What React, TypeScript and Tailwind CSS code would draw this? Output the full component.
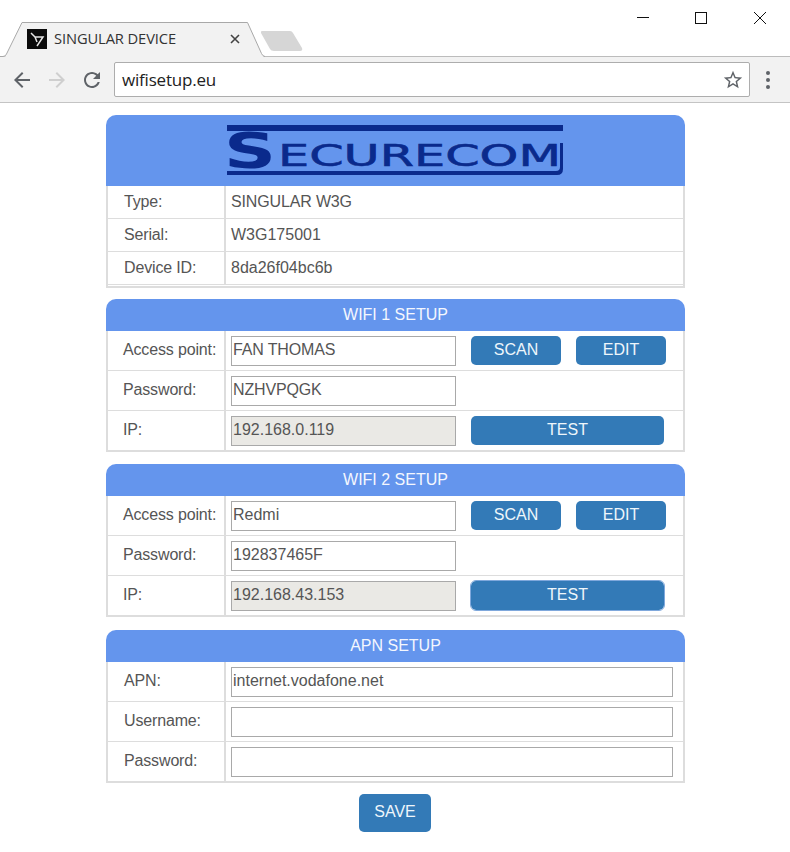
import type { ReactNode } from "react";

function Logo() {
  return (
    <svg width="338" height="52" viewBox="0 0 338 52" className="block overflow-visible">
      <rect x="0" y="0" width="336" height="6" fill="#0a2a8c" />
      <path d="M0 46h329q4 0 4-4V18h3v26q0 6-6 6H0z" fill="#0a2a8c" />
      <text
        x="-3"
        y="43"
        fontSize="49"
        fontWeight="700"
        textLength="52"
        lengthAdjust="spacingAndGlyphs"
        fill="#0a2a8c"
        className="font-['DejaVu_Sans',sans-serif]"
      >
        S
      </text>
      <text
        x="51"
        y="41"
        fontSize="31"
        textLength="283"
        lengthAdjust="spacingAndGlyphs"
        fill="#0a2a8c"
        stroke="#0a2a8c"
        strokeWidth="0.6"
        className="font-['DejaVu_Sans',sans-serif]"
      >
        ECURECOM
      </text>
    </svg>
  );
}

function Card({ title, mt, children }: { title: string; mt: string; children: ReactNode }) {
  return (
    <section className={`${mt} w-[579px]`}>
      <h2 className="h-8 rounded-t-[10px] bg-[#6495ed] text-center text-base font-normal leading-[31px] text-[#f4f7fe]">
        {title}
      </h2>
      <div className="border-x-2 border-b-2 border-[#dddddd]">{children}</div>
    </section>
  );
}

function Row({ label, children, last, inset }: { label: string; children: ReactNode; last?: boolean; inset?: boolean }) {
  return (
    <div className={`flex ${last ? "h-[39px]" : "h-10 border-b border-[#dddddd]"}`}>
      <div
        className={`flex w-[118px] shrink-0 items-center border-r-2 border-[#dddddd] pb-px tracking-[-0.15px] text-[#555555] ${
          inset ? "pl-4" : "pl-[15px]"
        }`}
      >
        {label}
      </div>
      <div className="flex flex-1 items-center gap-[15px] pl-[5px]">{children}</div>
    </div>
  );
}

function Field({ value = "", disabled, wide, tight }: { value?: string; disabled?: boolean; wide?: boolean; tight?: boolean }) {
  return (
    <input
      readOnly
      value={value}
      className={`h-[30px] border border-[#a9a9a9] px-px pb-0.5 text-base text-[#555555] outline-none ${
        wide ? "w-[442px]" : "w-[225px]"
      } ${disabled ? "bg-[#eae9e5]" : "bg-white"} ${tight ? "tracking-[-0.15px]" : ""}`}
    />
  );
}

function Btn({ children, w, focus }: { children: ReactNode; w: string; focus?: boolean }) {
  return (
    <button
      className={`${w} h-[29px] rounded-[5px] bg-[#337ab7] pb-0.5 text-base leading-none text-[#eef6fb] ${
        focus ? "outline outline-[#7fa8dc]" : ""
      }`}
    >
      {children}
    </button>
  );
}

function InfoRow({ label, value, last, tight }: { label: string; value: string; last?: boolean; tight?: boolean }) {
  return (
    <div className={`flex h-[33px] border-b border-[#dddddd] ${last ? "mb-px" : ""}`}>
      <div className="flex w-[118px] shrink-0 items-center border-r-2 border-[#dddddd] pl-4 tracking-[-0.15px] text-[#555555]">
        {label}
      </div>
      <div className={`flex items-center pl-[5px] text-[#555555] ${tight ? "tracking-[-0.15px]" : ""}`}>{value}</div>
    </div>
  );
}

export default function App() {
  return (
    <div className="min-h-[852px] w-[790px] bg-white font-['Liberation_Sans',Arial,sans-serif] text-base">
      {/* browser chrome */}
      <div className="flex h-[57px] items-start justify-between border-b border-[#bcbcbc] pt-[22px]">
        <div className="flex items-start">
          <div className="relative z-10 -mb-px flex h-[35px] w-[266px] items-center pl-[27px]">
            <svg width="266" height="35" viewBox="0 0 266 35" className="absolute left-0 top-0">
              <path d="M0 34.5h5.5L22 .5h225.5l14.5 32 2 2.5v1H0z" fill="#f2f2f2" />
              <path d="M0 34.5h3q2.5 0 3.5-2.5L22 .5h225.5l14 31q1.2 2.8 3.5 3" fill="none" stroke="#a8a8a8" />
            </svg>
            <svg width="20" height="20" viewBox="0 0 20 20" className="relative -mt-0.5 shrink-0">
              <rect width="20" height="20" fill="#0b0b0b" />
              <path d="M4 4l4 4h8l-6 9M8 8l2 5" fill="none" stroke="#e6e6e6" strokeWidth="1.5" />
            </svg>
            <span className="relative ml-[7px] -mt-0.5 w-[176px] font-['Open_Sans',sans-serif] text-[14.7px] tracking-[-0.1px] text-[#333333]">
              SINGULAR DEVICE
            </span>
            <svg width="10" height="10" viewBox="0 0 10 10" className="relative -mt-0.5">
              <path d="M1 1l8 8M9 1l-8 8" stroke="#444444" strokeWidth="1.6" />
            </svg>
          </div>
          <svg width="44" height="22" viewBox="0 0 44 22" className="ml-[-6px] mt-2">
            <path d="M2 1h28q2 0 3 2l9 15q1 3-2 3H14q-3 0-4-2L1 3q-.6-2 1-2z" fill="#d6d6d6" />
          </svg>
        </div>
        <div className="-mt-[11px] flex items-start pr-[23px]">
          <svg width="14" height="14" viewBox="0 0 14 14" className="mr-[44px]">
            <path d="M1 6.5h12" stroke="#111111" strokeWidth="1" />
          </svg>
          <svg width="14" height="14" viewBox="0 0 14 14" className="mr-[45px]">
            <rect x="1.5" y="1.5" width="11" height="11" fill="none" stroke="#111111" />
          </svg>
          <svg width="14" height="14" viewBox="0 0 14 14">
            <path d="M1 1l12 12M13 1L1 13" stroke="#111111" strokeWidth="1" />
          </svg>
        </div>
      </div>

      <div className="flex h-[46px] items-center border-b border-[#c4c4c4] bg-[#f2f2f2] pl-[10px]">
        <svg width="24" height="24" viewBox="0 0 24 24" fill="#5f6368">
          <path d="M20 11H7.83l5.59-5.59L12 4l-8 8 8 8 1.41-1.41L7.83 13H20v-2z" />
        </svg>
        <svg width="24" height="24" viewBox="0 0 24 24" fill="#cfcfcf" className="ml-[11px]">
          <path d="M12 4l-1.41 1.41L16.17 11H4v2h12.17l-5.58 5.59L12 20l8-8z" />
        </svg>
        <svg width="24" height="24" viewBox="0 0 24 24" fill="#5f6368" className="ml-[11px]">
          <path d="M17.65 6.35C16.2 4.9 14.21 4 12 4c-4.42 0-7.99 3.58-7.99 8s3.57 8 7.99 8c3.73 0 6.84-2.55 7.73-6h-2.08c-.82 2.33-3.04 4-5.65 4-3.31 0-6-2.69-6-6s2.69-6 6-6c1.66 0 3.14.69 4.22 1.78L13 11h7V4l-2.35 2.35z" />
        </svg>
        <div className="ml-[10px] flex h-[35px] w-[636px] items-center justify-between rounded-[2px] border border-[#adadad] bg-white pl-[7px] pr-[5px]">
          <span className="font-['Open_Sans',sans-serif] text-[17px] tracking-[-0.2px] text-[#222222]">wifisetup.eu</span>
          <svg width="22" height="22" viewBox="0 0 24 24" fill="#5f6368">
            <path d="M22 9.24l-7.19-.62L12 2 9.19 8.63 2 9.24l5.46 4.73L5.82 21 12 17.27 18.18 21l-1.63-7.03L22 9.24zM12 15.4l-3.76 2.27 1-4.28-3.32-2.88 4.38-.38L12 6.1l1.71 4.04 4.38.38-3.32 2.88 1 4.28L12 15.4z" />
          </svg>
        </div>
        <div className="ml-4 flex flex-col gap-[3px]">
          <span className="size-1 rounded-full bg-[#5f6368]" />
          <span className="size-1 rounded-full bg-[#5f6368]" />
          <span className="size-1 rounded-full bg-[#5f6368]" />
        </div>
      </div>

      {/* page */}
      <main className="flex flex-col items-center pl-[1px] pt-3">
        <section className="w-[579px]">
          <div className="h-[71px] rounded-t-[10px] bg-[#6495ed] pl-[121px] pt-[10px]">
            <Logo />
          </div>
          <div className="border-x-2 border-b-2 border-[#dddddd]">
            <InfoRow label="Type:" value="SINGULAR W3G" tight />
            <InfoRow label="Serial:" value="W3G175001" />
            <InfoRow label="Device ID:" value="8da26f04bc6b" last />
          </div>
        </section>

        <Card title="WIFI 1 SETUP" mt="mt-[11px]">
          <Row label="Access point:">
            <Field value="FAN THOMAS" tight />
            <Btn w="w-[90px]">SCAN</Btn>
            <Btn w="w-[90px]">EDIT</Btn>
          </Row>
          <Row label="Password:">
            <Field value="NZHVPQGK" tight />
          </Row>
          <Row label="IP:" last>
            <Field value="192.168.0.119" disabled />
            <Btn w="w-[193px]">TEST</Btn>
          </Row>
        </Card>

        <Card title="WIFI 2 SETUP" mt="mt-3">
          <Row label="Access point:">
            <Field value="Redmi" />
            <Btn w="w-[90px]">SCAN</Btn>
            <Btn w="w-[90px]">EDIT</Btn>
          </Row>
          <Row label="Password:">
            <Field value="192837465F" />
          </Row>
          <Row label="IP:" last>
            <Field value="192.168.43.153" disabled />
            <Btn w="w-[193px]" focus>
              TEST
            </Btn>
          </Row>
        </Card>

        <Card title="APN SETUP" mt="mt-[13px]">
          <Row label="APN:" inset>
            <Field value="internet.vodafone.net" wide />
          </Row>
          <Row label="Username:" inset>
            <Field wide />
          </Row>
          <Row label="Password:" last inset>
            <Field wide />
          </Row>
        </Card>

        <button className="-ml-px mt-[11px] h-[38px] w-[72px] rounded-[5px] bg-[#337ab7] pb-0.5 text-base text-[#eef6fb]">
          SAVE
        </button>
      </main>
    </div>
  );
}
